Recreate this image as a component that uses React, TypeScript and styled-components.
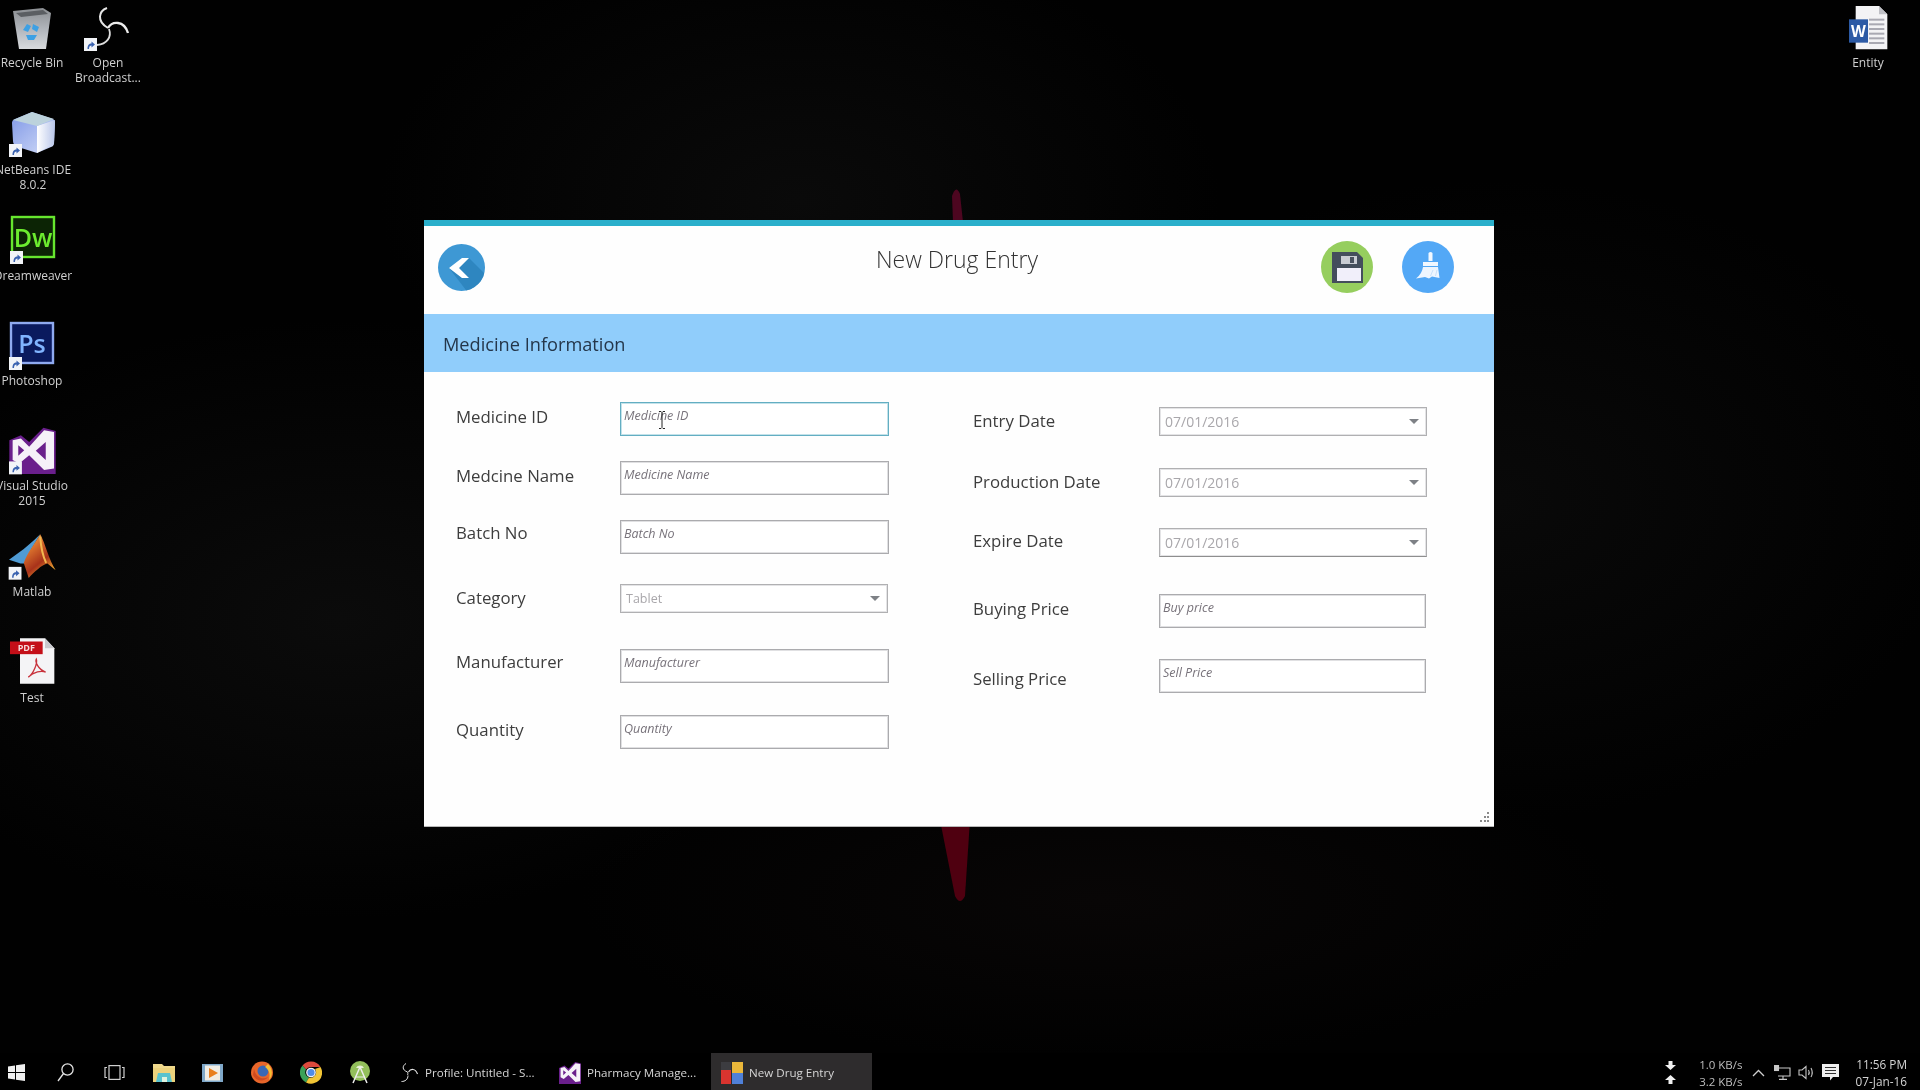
import React from "react";
import styled, { createGlobalStyle } from "styled-components";

const GlobalStyle = createGlobalStyle`
  html, body {
    margin: 0;
    padding: 0;
    background: #000;
    overflow: hidden;
  }
  * {
    box-sizing: border-box;
  }
`;

const Desktop = styled.div`
  position: relative;
  width: 1920px;
  height: 1090px;
  overflow: hidden;
  font-family: "Open Sans", "Liberation Sans", sans-serif;
  background:
    radial-gradient(ellipse 420px 260px at 800px 200px, #0a0a0a 0%, transparent 100%),
    radial-gradient(ellipse 500px 300px at 340px 620px, #0b0b0b 0%, transparent 100%),
    radial-gradient(ellipse 460px 320px at 1500px 500px, #090909 0%, transparent 100%),
    radial-gradient(ellipse 520px 160px at 1100px 900px, #080606 0%, transparent 100%),
    #010101;
  filter: blur(0.35px);
`;

const Wallpaper = styled.svg`
  position: absolute;
  left: 0;
  top: 0;
`;

const DesktopIcon = styled.div<{ $left: number; $top: number; $gap: number }>`
  position: absolute;
  left: ${(p) => p.$left}px;
  top: ${(p) => p.$top}px;
  width: 76px;
  display: flex;
  flex-direction: column;
  align-items: center;
  gap: ${(p) => p.$gap}px;
`;

const IconLabel = styled.div`
  font-size: 12px;
  line-height: 15px;
  color: #d0d0d0;
  text-align: center;
  white-space: nowrap;
`;

const AppWindow = styled.div`
  position: absolute;
  left: 424px;
  top: 220px;
  width: 1070px;
  height: 607px;
  background: #fefefe;
  border-top: 6px solid #2aafcb;
  border-bottom: 1px solid #b8b8b8;
`;

const Header = styled.div`
  height: 88px;
  display: grid;
  grid-template-columns: 1fr auto 1fr;
  align-items: center;
  padding: 0 4px 6px 0;
`;

const BackSlot = styled.div`
  display: flex;
  padding-left: 14px;
`;

const Title = styled.div`
  font-size: 23px;
  font-weight: 300;
  color: #333;
  margin-bottom: 17px;
`;

const Actions = styled.div`
  display: flex;
  justify-content: flex-end;
  gap: 29px;
  padding-right: 36px;
`;

const RoundButton = styled.button<{ $size: number }>`
  width: ${(p) => p.$size}px;
  height: ${(p) => p.$size}px;
  padding: 0;
  border: 0;
  background: none;
  display: block;
`;

const Band = styled.div`
  height: 58px;
  background: #90cdfb;
  display: flex;
  align-items: center;
  padding: 2px 0 0 19px;
  font-size: 18.2px;
  color: #24364a;
`;

const FormBody = styled.div`
  display: flex;
  padding-left: 32px;
  gap: 84px;
`;

const Column = styled.div<{ $labelWidth: number }>`
  display: flex;
  flex-direction: column;
  flex: none;
  --label-width: ${(p) => p.$labelWidth}px;
`;

const Row = styled.div<{ $mt: number }>`
  display: flex;
  align-items: flex-start;
  margin-top: ${(p) => p.$mt}px;
`;

const Label = styled.label<{ $pt: number }>`
  width: var(--label-width);
  flex: none;
  padding-top: ${(p) => p.$pt}px;
  font-size: 16.8px;
  line-height: 24px;
  color: #3d3d3d;
`;

const FieldBox = styled.div<{ $w: number }>`
  position: relative;
  width: ${(p) => p.$w}px;
  height: 34px;
`;

const TextInput = styled.input<{ $focused?: boolean }>`
  width: 100%;
  height: 100%;
  padding: 0 4px 8px 3px;
  font-family: inherit;
  font-size: 12.5px;
  font-style: italic;
  background: #fff;
  outline: 0;
  border: 1px solid ${(p) => (p.$focused ? "#63aec2" : "#ababae")};
  box-shadow: inset 0 0 0 1px ${(p) => (p.$focused ? "#c3e2ea" : "#e0e0e2")};

  &::placeholder {
    color: #77727a;
    opacity: 1;
  }
`;

const IBeam = styled.svg`
  position: absolute;
  left: 38px;
  top: 9px;
`;

const SelectBox = styled.div<{ $h: number; $dark?: boolean; $size: number }>`
  width: 268px;
  flex: none;
  height: ${(p) => p.$h}px;
  display: flex;
  align-items: center;
  justify-content: space-between;
  padding: 0 7px 0 5px;
  background: #fff;
  border: 1px solid #b0b0b2;
  border-bottom-color: ${(p) => (p.$dark ? "#8e8e8e" : "#b0b0b2")};
  box-shadow: inset 0 0 0 1px #e4e4e6;
  font-size: ${(p) => p.$size}px;
  color: #a9a7ab;

  &::after {
    content: "";
    border-left: 5px solid transparent;
    border-right: 5px solid transparent;
    border-top: 5px solid #7e8186;
  }
`;

const Grip = styled.svg`
  position: absolute;
  right: 5px;
  bottom: 3px;
`;

const Taskbar = styled.div`
  position: absolute;
  left: 0;
  right: 0;
  bottom: 0;
  height: 37px;
  display: flex;
  align-items: stretch;
  background: #000;
  color: #d6d6d6;
`;

const PinnedStrip = styled.div`
  display: flex;
  margin-left: -8px;
  margin-right: 5px;
  padding-top: 2px;
`;

const PinnedSlot = styled.div`
  width: 49px;
  display: flex;
  align-items: center;
  justify-content: center;
`;

const TaskButton = styled.div<{ $active?: boolean; $width: number }>`
  width: ${(p) => p.$width}px;
  display: flex;
  align-items: center;
  gap: 6px;
  padding: 2px 0 0 10px;
  font-size: 11.6px;
  white-space: nowrap;
  background: ${(p) => (p.$active ? "#2e2c2d" : "transparent")};
`;

const Tray = styled.div`
  margin-left: auto;
  display: flex;
  align-items: center;
  padding: 2px 13px 0 0;
`;

const SpeedArrows = styled.div`
  display: flex;
  flex-direction: column;
  gap: 5px;
  margin-right: 23px;
`;

const Speeds = styled.div`
  font-size: 11.5px;
  line-height: 17px;
  text-align: right;
  color: #bdbdbd;
  margin-right: 4px;
`;

const TraySlot = styled.div`
  width: 24px;
  display: flex;
  justify-content: center;
`;

const Clock = styled.div`
  font-size: 11.8px;
  line-height: 17px;
  text-align: right;
  color: #d4d4d4;
  margin-left: 13px;
  white-space: nowrap;
`;

const ShortcutBadge = ({ x, y, s = 1 }: { x: number; y: number; s?: number }) => (
  <g transform={`translate(${x} ${y}) scale(${s})`}>
    <rect width="13" height="13" fill="#f2f4f8" />
    <path d="M3.5 11 C3.5 7 5 5.5 7.5 5.5 V3.5 L11 6.5 L7.5 9.5 V7.5 C6 7.5 5 8.5 5 11 Z" fill="#3a62b0" />
  </g>
);

const ObsSwirl = ({ w, h, color = "#e8e8e8" }: { w: number; h: number; color?: string }) => (
  <svg width={w} height={h} viewBox="0 0 40 40" fill="none">
    <path d="M14 1 C6 6 6 14 17 18 C18 20 18 22 17 24" stroke={color} strokeWidth="2" />
    <path d="M19 18 C23 11 33 10 37 22" stroke={color} strokeWidth="2.2" />
    <path d="M18 25 C18 33 12 37 5 37" stroke={color} strokeWidth="2" />
  </svg>
);

const RecycleIcon = () => (
  <svg width="38" height="42" viewBox="0 0 38 42">
    <defs>
      <linearGradient id="bin" x1="0" y1="0" x2="0" y2="1">
        <stop offset="0" stopColor="#8b8e92" />
        <stop offset="0.6" stopColor="#b8bcc2" />
        <stop offset="1" stopColor="#d8dadd" />
      </linearGradient>
    </defs>
    <path d="M0 3 L30 0 L38 5 L33 41 L6 41 Z" fill="url(#bin)" />
    <path d="M3 5 L30 2 L35 6 L8 9 Z" fill="#5b5e62" />
    <path d="M10 22 L14 16 L18 18 L15 24 Z M20 16 L26 19 L24 24 L19 21 Z M13 27 L24 27 L21 32 L15 32 Z" fill="#3da0e4" />
  </svg>
);

const ObsIcon = () => (
  <svg width="56" height="44" viewBox="0 0 56 44" style={{ overflow: "visible" }}>
    <path d="M27 0 C19 3 16 13 28 20" stroke="#e6e6e6" strokeWidth="2" fill="none" />
    <path d="M28 20 C32 13 44 12 48 25" stroke="#ececec" strokeWidth="2.4" fill="none" />
    <path d="M29 21 C32 29 27 36 17 37" stroke="#dedede" strokeWidth="1.8" fill="none" />
    <ShortcutBadge x={4} y={30} />
  </svg>
);

const NetBeansIcon = () => (
  <svg width="46" height="46" viewBox="0 0 46 46" style={{ overflow: "visible" }}>
    <defs>
      <linearGradient id="nbL" x1="0" y1="0" x2="1" y2="1">
        <stop offset="0" stopColor="#7f97e6" />
        <stop offset="1" stopColor="#d3ddf8" />
      </linearGradient>
      <linearGradient id="nbR" x1="0" y1="0" x2="1" y2="0">
        <stop offset="0" stopColor="#ffffff" />
        <stop offset="1" stopColor="#b9c6ea" />
      </linearGradient>
    </defs>
    <path d="M22 1 L43 8 Q45 9 45 12 L44 32 Q44 35 41 36 L27 42 L8 36 Q3 34 3 30 L2 12 Q2 9 5 8 Z" fill="url(#nbL)" />
    <path d="M27 15 L45 9 L44 33 L27 42 Z" fill="url(#nbR)" />
    <path d="M22 1 L44 8 L27 15 L3 9 Z" fill="#bcd2dc" />
    <ShortcutBadge x={-1} y={33} />
  </svg>
);

const AdobeIcon = ({ text, border, fill, ink }: { text: string; border: string; fill: string; ink: string }) => (
  <svg width="46" height="44" viewBox="0 0 46 44" style={{ overflow: "visible" }}>
    <rect x="2" y="1" width="42" height="40" fill={fill} stroke={border} strokeWidth="2.4" />
    <text x="23" y="31" textAnchor="middle" fontFamily="Open Sans, sans-serif" fontSize="25" fontWeight="600" fill={ink}>
      {text}
    </text>
    <ShortcutBadge x={0} y={35} />
  </svg>
);

const StudioIcon = () => (
  <svg width="47" height="48" viewBox="25 80 140 145" style={{ overflow: "visible" }}>
    <path d="M25 120 L60 105 L85 125 L128 82 L165 92 V222 L25 222 Z" fill="#6a1f8c" />
    <path d="M35 120 L60 115 L85 140 L130 90 L160 95 V205 L130 210 L85 165 L55 190 L35 180 Z" fill="#f5f1f8" />
    <path d="M105 152 L135 125 V180 Z M52 135 L70 150 L52 167 Z" fill="#6a1f8c" />
    <ShortcutBadge x={24} y={184} s={3} />
  </svg>
);

const MatlabIcon = () => (
  <svg width="48" height="46" viewBox="22 403 146 138" style={{ overflow: "visible" }}>
    <defs>
      <linearGradient id="mat" x1="0" y1="0" x2="0.6" y2="1">
        <stop offset="0" stopColor="#f6cf70" />
        <stop offset="0.35" stopColor="#d9702c" />
        <stop offset="0.7" stopColor="#a8321a" />
        <stop offset="1" stopColor="#f0a830" />
      </linearGradient>
    </defs>
    <path d="M25 480 L70 448 L100 422 L120 403 L92 450 L72 492 L60 492 Z" fill="#4f9bd4" />
    <path d="M120 403 C135 430 148 485 167 512 L142 492 C125 495 100 520 85 536 L70 490 C80 460 105 430 120 403 Z" fill="url(#mat)" />
    <path d="M120 410 C122 440 126 465 138 490" stroke="#f2b850" strokeWidth="6" fill="none" />
    <ShortcutBadge x={24} y={502} s={3} />
  </svg>
);

const PdfIcon = () => (
  <svg width="45" height="47" viewBox="25 715 135 140">
    <path d="M55 715 H130 L158 745 V852 H55 Z" fill="#f4f4f6" />
    <path d="M130 715 L158 745 H130 Z" fill="#c9c9cd" />
    <rect x="25" y="725" width="98" height="38" fill="#c40f18" />
    <text x="74" y="754" textAnchor="middle" fontFamily="Open Sans, sans-serif" fontSize="27" fontWeight="700" fill="#f6dcdc">
      PDF
    </text>
    <path
      d="M80 832 C95 822 108 790 104 778 C100 785 108 808 132 817 C120 812 96 815 80 832 Z"
      fill="none"
      stroke="#c8323c"
      strokeWidth="4"
    />
  </svg>
);

const WordIcon = () => (
  <svg width="39" height="44" viewBox="140 20 117 132">
    <path d="M160 20 H230 L255 45 V150 H160 Z" fill="#f3f3f5" />
    <path d="M230 20 L255 45 H230 Z" fill="#bfc0c6" />
    {[58, 72, 86, 100, 114, 128].map((y) => (
      <rect key={y} x="200" y={y} width="46" height="6" fill="#a9a9b2" />
    ))}
    <rect x="140" y="60" width="57" height="70" fill="#2c5aa5" />
    <text x="168" y="112" textAnchor="middle" fontFamily="Open Sans, sans-serif" fontSize="46" fontWeight="700" fill="#fff">
      W
    </text>
  </svg>
);

const BackIcon = () => (
  <svg width="47" height="47" viewBox="0 0 47 47">
    <defs>
      <clipPath id="backClip">
        <circle cx="23.5" cy="23.5" r="23.5" />
      </clipPath>
    </defs>
    <circle cx="23.5" cy="23.5" r="23.5" fill="#3e98d4" />
    <path d="M31 14 L50 33 V50 H31 L11 24 Z" fill="#2e86c0" clipPath="url(#backClip)" />
    <path d="M11 24 L24 14 H31 L21 24 L31 34 H24 Z" fill="#fff" />
  </svg>
);

const SaveIcon = () => (
  <svg width="52" height="52" viewBox="0 0 52 52">
    <circle cx="26" cy="26" r="26" fill="#96ce5e" />
    <path d="M11 11 H36 L42 17 V42 H11 Z" fill="#444e5c" />
    <rect x="20" y="15" width="16" height="8" fill="#c9ccd3" />
    <rect x="29" y="16" width="4" height="6" fill="#4a525f" />
    <rect x="16" y="27" width="24" height="13" fill="#f1effa" />
  </svg>
);

const BroomIcon = () => (
  <svg width="52" height="52" viewBox="0 0 52 52">
    <circle cx="26" cy="26" r="26" fill="#53a8f6" />
    <path d="M26.5 12 Q28.5 10 30.5 12 V20 H26.5 Z" fill="#f2f8ff" />
    <path d="M21 21 H36 V25 H21 Z" fill="#f2f8ff" />
    <path d="M21 26 H36 L37.5 37 L30 35.5 L27 37.5 L23 36 L14 37.5 Q20 33 21 26 Z" fill="#eef6ff" />
    <path d="M31 29 L28.5 35 M35 29 L33.5 35" stroke="#c3def9" strokeWidth="0.9" />
  </svg>
);

const WindowsGlyph = () => (
  <svg width="17" height="17" viewBox="0 0 17 17" fill="#f0f0f0">
    <path d="M0 2.5 L7 1.4 V8 H0 Z M8 1.2 L17 0 V8 H8 Z M0 9 H7 V15.6 L0 14.5 Z M8 9 H17 V17 L8 15.8 Z" />
  </svg>
);

const SearchGlyph = () => (
  <svg width="17" height="19" viewBox="0 0 17 19" fill="none" stroke="#e4e4e4" strokeWidth="1.3">
    <circle cx="10.5" cy="6.5" r="5.6" />
    <path d="M6.5 10.5 L1 18" />
  </svg>
);

const TaskViewGlyph = () => (
  <svg width="21" height="15" viewBox="0 0 21 15" fill="none" stroke="#cfcfcf" strokeWidth="1.2">
    <rect x="5" y="0.6" width="11" height="13.8" />
    <path d="M3 2.5 H1 V12.5 H3 M18 2.5 H20 V12.5 H18" />
  </svg>
);

const FolderGlyph = () => (
  <svg width="22" height="18" viewBox="0 0 22 18">
    <path d="M0 0 H9 L11 2 H22 V18 H0 Z" fill="#f0d98c" />
    <rect x="0" y="4" width="22" height="14" fill="#ecd27c" />
    <path d="M5 9 H17 L19 18 H3 Z" fill="#58c3cf" />
    <rect x="9" y="13" width="5" height="5" fill="#dff3e0" />
  </svg>
);

const MediaGlyph = () => (
  <svg width="21" height="18" viewBox="0 0 21 18">
    <rect width="21" height="18" fill="#7fa8c9" />
    <rect x="3" y="1.5" width="15" height="15" fill="#f1ede4" />
    <path d="M7 4 L16 9 L7 14 Z" fill="#e9801f" />
  </svg>
);

const FirefoxGlyph = () => (
  <svg width="22" height="23" viewBox="0 0 22 23">
    <circle cx="11" cy="11.5" r="11" fill="#e8662a" />
    <circle cx="12" cy="10" r="5.5" fill="#3a68b4" />
    <path d="M17 3 C22 8 22 15 18 19 C20 12 17 8 14 6 Z" fill="#f7bd33" />
    <path d="M3 8 C5 17 12 19 17 16 C14 21 5 21 2 14 Z" fill="#cf4a1f" />
  </svg>
);

const ChromeGlyph = () => (
  <svg width="22" height="23" viewBox="0 0 22 22">
    <path d="M11 0 A11 11 0 0 1 20.5 5.5 H11 A5.5 5.5 0 0 0 6 8 L2.5 4 A11 11 0 0 1 11 0 Z" fill="#de4a3c" />
    <path d="M2.5 4 L6 8 A5.5 5.5 0 0 0 9 16 L6 21 A11 11 0 0 1 2.5 4 Z" fill="#3ba158" />
    <path d="M20.5 5.5 A11 11 0 0 1 6 21 L9 16 A5.5 5.5 0 0 0 15 7.5 Z" fill="#f2c535" />
    <circle cx="11" cy="11" r="4.2" fill="#4f8ce8" stroke="#f4f4f4" strokeWidth="1.3" />
  </svg>
);

const AndroidGlyph = () => (
  <svg width="20" height="23" viewBox="0 0 20 23">
    <circle cx="10" cy="10" r="10" fill="#93bf5b" />
    <path d="M6 7 A4.5 4.5 0 0 1 14 7 Z" fill="#e6f0d4" />
    <path d="M10 6 L3 22 M10 6 L17 22" stroke="#ededed" strokeWidth="1.5" />
    <path d="M5 16 H15" stroke="#ededed" strokeWidth="1" />
  </svg>
);

const StudioSmall = () => (
  <svg width="22" height="24" viewBox="25 80 140 145">
    <path d="M25 120 L60 105 L85 125 L128 82 L165 92 V222 L25 222 Z" fill="#6a1f8c" />
    <path d="M35 120 L60 115 L85 140 L130 90 L160 95 V205 L130 210 L85 165 L55 190 L35 180 Z" fill="#f5f1f8" />
    <path d="M105 152 L135 125 V180 Z M52 135 L70 150 L52 167 Z" fill="#6a1f8c" />
  </svg>
);

const PharmacyGlyph = () => (
  <svg width="22" height="22" viewBox="0 0 22 22">
    <rect x="0" y="0" width="10" height="8" fill="#3c3c40" />
    <rect x="0" y="8" width="10" height="14" fill="#d8342f" />
    <rect x="11" y="0" width="11" height="11" fill="#eab73a" />
    <rect x="11" y="11" width="11" height="11" fill="#4f80d8" />
  </svg>
);

const ArrowGlyph = ({ up }: { up?: boolean }) => (
  <svg width="11" height="9" viewBox="0 0 11 9" fill="#f0f0f0" style={{ transform: up ? "none" : "rotate(180deg)" }}>
    <path d="M5.5 0 L11 5 H7.5 V9 H3.5 V5 H0 Z" />
  </svg>
);

const ChevronGlyph = () => (
  <svg width="13" height="8" viewBox="0 0 13 8" fill="none" stroke="#cfcfcf" strokeWidth="1.3">
    <path d="M1 7 L6.5 1.5 L12 7" />
  </svg>
);

const NetworkGlyph = () => (
  <svg width="17" height="15" viewBox="0 0 17 15" fill="none" stroke="#c8c8c8" strokeWidth="1.1">
    <path d="M3 3 H16 V11 H4" />
    <rect x="0.5" y="0.5" width="4" height="5" fill="#c8c8c8" />
    <path d="M9 11 V14 M5 14.4 H13" />
  </svg>
);

const VolumeGlyph = () => (
  <svg width="17" height="15" viewBox="0 0 17 15" fill="none" stroke="#c4c4c4" strokeWidth="1.1">
    <path d="M1 5 H4 L8 1.5 V13.5 L4 10 H1 Z" />
    <path d="M10.5 5 Q12 7.5 10.5 10 M13 3 Q15.5 7.5 13 12" />
  </svg>
);

const NotifyGlyph = () => (
  <svg width="17" height="17" viewBox="0 0 17 17">
    <path d="M0 0 H17 V13 H11 L8 16.5 L8 13 H0 Z" fill="#f0f0f0" />
    <path d="M3 3.5 H14 M3 6.5 H14 M3 9.5 H14" stroke="#333" strokeWidth="1" />
  </svg>
);

const desktopIcons = [
  { left: -6, top: 8, gap: 5, lines: ["Recycle Bin"], icon: <RecycleIcon /> },
  { left: 70, top: 8, gap: 3, lines: ["Open", "Broadcast..."], icon: <ObsIcon /> },
  { left: -5, top: 111, gap: 5, lines: ["NetBeans IDE", "8.0.2"], icon: <NetBeansIcon /> },
  { left: -5, top: 216, gap: 8, lines: ["Dreamweaver"], icon: <AdobeIcon text="Dw" border="#66e62e" fill="#0c2405" ink="#6cec2f" /> },
  { left: -6, top: 322, gap: 7, lines: ["Photoshop"], icon: <AdobeIcon text="Ps" border="#8faaf0" fill="#0a1a5e" ink="#80b4ff" /> },
  { left: -6, top: 427, gap: 3, lines: ["Visual Studio", "2015"], icon: <StudioIcon /> },
  { left: -6, top: 534, gap: 4, lines: ["Matlab"], icon: <MatlabIcon /> },
  { left: -6, top: 638, gap: 5, lines: ["Test"], icon: <PdfIcon /> },
  { left: 1830, top: 6, gap: 5, lines: ["Entity"], icon: <WordIcon /> },
];

type FieldDef = {
  label: string;
  mt: number;
  pt: number;
  placeholder?: string;
  focused?: boolean;
  select?: string;
  h?: number;
  w?: number;
  size?: number;
  dark?: boolean;
};

const leftFields: FieldDef[] = [
  { label: "Medicine ID", mt: 30, pt: 3, placeholder: "Medicine ID", focused: true, w: 269 },
  { label: "Medcine Name", mt: 25, pt: 3, placeholder: "Medicine Name", w: 269 },
  { label: "Batch No", mt: 25, pt: 1, placeholder: "Batch No", w: 269 },
  { label: "Category", mt: 30, pt: 2, select: "Tablet", h: 29, size: 12.5 },
  { label: "Manufacturer", mt: 36, pt: 1, placeholder: "Manufacturer", w: 269 },
  { label: "Quantity", mt: 32, pt: 3, placeholder: "Quantity", w: 269 },
];

const rightFields: FieldDef[] = [
  { label: "Entry Date", mt: 35, pt: 2, select: "07/01/2016", h: 29 },
  { label: "Production Date", mt: 32, pt: 2, select: "07/01/2016", h: 29 },
  { label: "Expire Date", mt: 31, pt: 1, select: "07/01/2016", h: 29, dark: true },
  { label: "Buying Price", mt: 37, pt: 3, placeholder: "Buy price", w: 267 },
  { label: "Selling Price", mt: 31, pt: 8, placeholder: "Sell Price", w: 267 },
];

const FieldRow = ({ field }: { field: FieldDef }) => (
  <Row $mt={field.mt}>
    <Label $pt={field.pt}>{field.label}</Label>
    {field.select ? (
      <SelectBox $h={field.h ?? 29} $dark={field.dark} $size={field.size ?? 14}>
        {field.select}
      </SelectBox>
    ) : (
      <FieldBox $w={field.w ?? 269}>
        <TextInput placeholder={field.placeholder} $focused={field.focused} readOnly />
        {field.focused && (
          <IBeam width="8" height="18" viewBox="0 0 8 18" fill="none" stroke="#222" strokeWidth="1">
            <path d="M1 0.5 H3 L4 1.5 L5 0.5 H7 M4 1.5 V16 M1 17.5 H3 L4 16.5 L5 17.5 H7" />
          </IBeam>
        )}
      </FieldBox>
    )}
  </Row>
);

export default function App() {
  return (
    <>
      <GlobalStyle />
      <Desktop>
        <Wallpaper width="1920" height="1090" viewBox="0 0 1920 1090">
          <path d="M952 196 Q956 184 960 194 L963 222 H953 Z" fill="#4d0620" />
          <path d="M940 820 H970 L965 896 Q960 906 955 896 Z" fill="#4f0010" />
        </Wallpaper>

        {desktopIcons.map((item) => (
          <DesktopIcon key={item.lines[0]} $left={item.left} $top={item.top} $gap={item.gap}>
            {item.icon}
            <IconLabel>
              {item.lines.map((line) => (
                <div key={line}>{line}</div>
              ))}
            </IconLabel>
          </DesktopIcon>
        ))}

        <AppWindow>
          <Header>
            <BackSlot>
              <RoundButton $size={47}>
                <BackIcon />
              </RoundButton>
            </BackSlot>
            <Title>New Drug Entry</Title>
            <Actions>
              <RoundButton $size={52}>
                <SaveIcon />
              </RoundButton>
              <RoundButton $size={52}>
                <BroomIcon />
              </RoundButton>
            </Actions>
          </Header>
          <Band>Medicine Information</Band>
          <FormBody>
            <Column $labelWidth={164}>
              {leftFields.map((field) => (
                <FieldRow key={field.label} field={field} />
              ))}
            </Column>
            <Column $labelWidth={186}>
              {rightFields.map((field) => (
                <FieldRow key={field.label} field={field} />
              ))}
            </Column>
          </FormBody>
          <Grip width="9" height="11" viewBox="0 0 9 11" fill="#8a8a8a">
            <rect x="7" y="0" width="2" height="2" />
            <rect x="4" y="4" width="2" height="2" />
            <rect x="7" y="4" width="2" height="2" />
            <rect x="0" y="8" width="2" height="2" />
            <rect x="4" y="8" width="2" height="2" />
            <rect x="7" y="8" width="2" height="2" />
          </Grip>
        </AppWindow>

        <Taskbar>
          <PinnedStrip>
            <PinnedSlot><WindowsGlyph /></PinnedSlot>
            <PinnedSlot><SearchGlyph /></PinnedSlot>
            <PinnedSlot><TaskViewGlyph /></PinnedSlot>
            <PinnedSlot><FolderGlyph /></PinnedSlot>
            <PinnedSlot><MediaGlyph /></PinnedSlot>
            <PinnedSlot><FirefoxGlyph /></PinnedSlot>
            <PinnedSlot><ChromeGlyph /></PinnedSlot>
            <PinnedSlot><AndroidGlyph /></PinnedSlot>
          </PinnedStrip>
          <TaskButton $width={160}>
            <ObsSwirl w={20} h={20} />
            Profile: Untitled - S...
          </TaskButton>
          <TaskButton $width={162}>
            <StudioSmall />
            Pharmacy Manage...
          </TaskButton>
          <TaskButton $width={161} $active>
            <PharmacyGlyph />
            New Drug Entry
          </TaskButton>
          <Tray>
            <SpeedArrows>
              <ArrowGlyph />
              <ArrowGlyph up />
            </SpeedArrows>
            <Speeds>
              <div>1.0 KB/s</div>
              <div>3.2 KB/s</div>
            </Speeds>
            <TraySlot><ChevronGlyph /></TraySlot>
            <TraySlot><NetworkGlyph /></TraySlot>
            <TraySlot><VolumeGlyph /></TraySlot>
            <TraySlot><NotifyGlyph /></TraySlot>
            <Clock>
              <div>11:56 PM</div>
              <div>07-Jan-16</div>
            </Clock>
          </Tray>
        </Taskbar>
      </Desktop>
    </>
  );
}
